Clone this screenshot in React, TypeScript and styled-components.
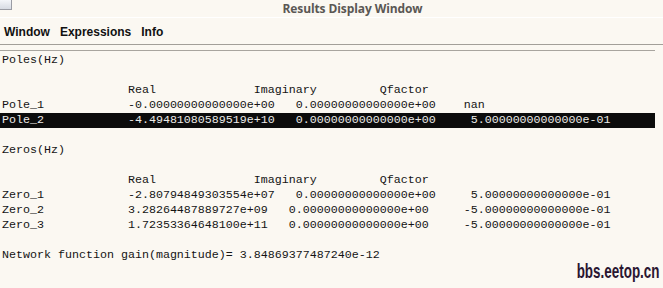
import React from 'react'
import styled, { createGlobalStyle } from 'styled-components'

const GlobalStyle = createGlobalStyle`
  html, body {
    margin: 0;
    padding: 0;
    background: #fbf8f2;
  }
`

// window frame
const Frame = styled.div`
  position: relative;
  width: 663px;
  height: 288px;
  overflow: hidden;
  background: #fbf8f2;
`

const TitleBar = styled.div`
  position: relative;
  height: 17px;
  border-bottom: 1px solid #ffffff;
  display: flex;
  align-items: center;
  justify-content: center;
`

const TitleText = styled.div`
  margin-left: 42px;
  font-family: 'Open Sans', 'DejaVu Sans', sans-serif;
  font-weight: 700;
  font-size: 12px;
  line-height: 17px;
  color: #5a5754;
  letter-spacing: -0.1px;
`

const WinIcon = styled.div`
  position: absolute;
  left: -2px;
  top: -1px;
  width: 12px;
  height: 9px;
  border: 1px solid #9a9ca4;
  background: linear-gradient(#f4f6fa, #d7dbe3);
`

const MenuBar = styled.div`
  height: 26px;
  display: flex;
  align-items: center;
  gap: 10px;
  padding: 0 0 0 4px;
  border-bottom: 1px solid #a29f99;
`

const MenuItem = styled.span`
  font-family: 'Liberation Sans', Arial, sans-serif;
  font-weight: 700;
  font-size: 12px;
  color: #111;
  padding-top: 1px;
`

const Output = styled.div`
  margin-top: 5px;
  padding-top: 2px;
  border-top: 1px solid #a8a59f;
  margin-right: 8px;
`

const Line = styled.div<{ $selected?: boolean }>`
  height: 15px;
  padding-left: 2px;
  font-family: 'Liberation Mono', 'Courier New', monospace;
  font-size: 11.67px;
  line-height: 15px;
  white-space: pre;
  color: ${(p) => (p.$selected ? '#ecebe8' : '#141414')};
  background: ${(p) => (p.$selected ? '#0c0c0c' : 'transparent')};
`

const Watermark = styled.div`
  position: absolute;
  right: 3px;
  top: 259px;
  font-family: 'Liberation Sans', Arial, sans-serif;
  font-weight: 700;
  font-size: 21px;
  line-height: 24px;
  color: #2a1631;
  transform: scaleX(0.64);
  transform-origin: right center;
`

// label column, then values with the fixed separators of the printout
const row = (label: string, a: string, b: string, c: string) =>
  label.padEnd(18) + a + '   ' + b + '     ' + c

const header = ''.padEnd(18) + 'Real'.padEnd(18) + 'Imaginary'.padEnd(18) + 'Qfactor'

const lines: { text: string; selected?: boolean }[] = [
  { text: 'Poles(Hz)' },
  { text: '' },
  { text: header },
  { text: 'Pole_1'.padEnd(18) + '-0.00000000000000e+00   0.00000000000000e+00    nan' },
  {
    text: row('Pole_2', '-4.49481080589519e+10', '0.00000000000000e+00', '5.00000000000000e-01'),
    selected: true,
  },
  { text: '' },
  { text: 'Zeros(Hz)' },
  { text: '' },
  { text: header },
  { text: row('Zero_1', '-2.80794849303554e+07', '0.00000000000000e+00', '5.00000000000000e-01') },
  { text: row('Zero_2', '3.28264487889727e+09', '0.00000000000000e+00', '-5.00000000000000e-01') },
  { text: row('Zero_3', '1.72353364648100e+11', '0.00000000000000e+00', '-5.00000000000000e-01') },
  { text: '' },
  { text: 'Network function gain(magnitude)= 3.84869377487240e-12' },
]

const App = () => {
  return (
    <Frame>
      <GlobalStyle />
      <TitleBar>
        <WinIcon />
        <TitleText>Results Display Window</TitleText>
      </TitleBar>
      <MenuBar>
        <MenuItem>Window</MenuItem>
        <MenuItem>Expressions</MenuItem>
        <MenuItem>Info</MenuItem>
      </MenuBar>
      <Output>
        {lines.map((l, i) => (
          <Line key={i} $selected={l.selected}>
            {l.text}
          </Line>
        ))}
      </Output>
      <Watermark>bbs.eetop.cn</Watermark>
    </Frame>
  )
}

export default App
